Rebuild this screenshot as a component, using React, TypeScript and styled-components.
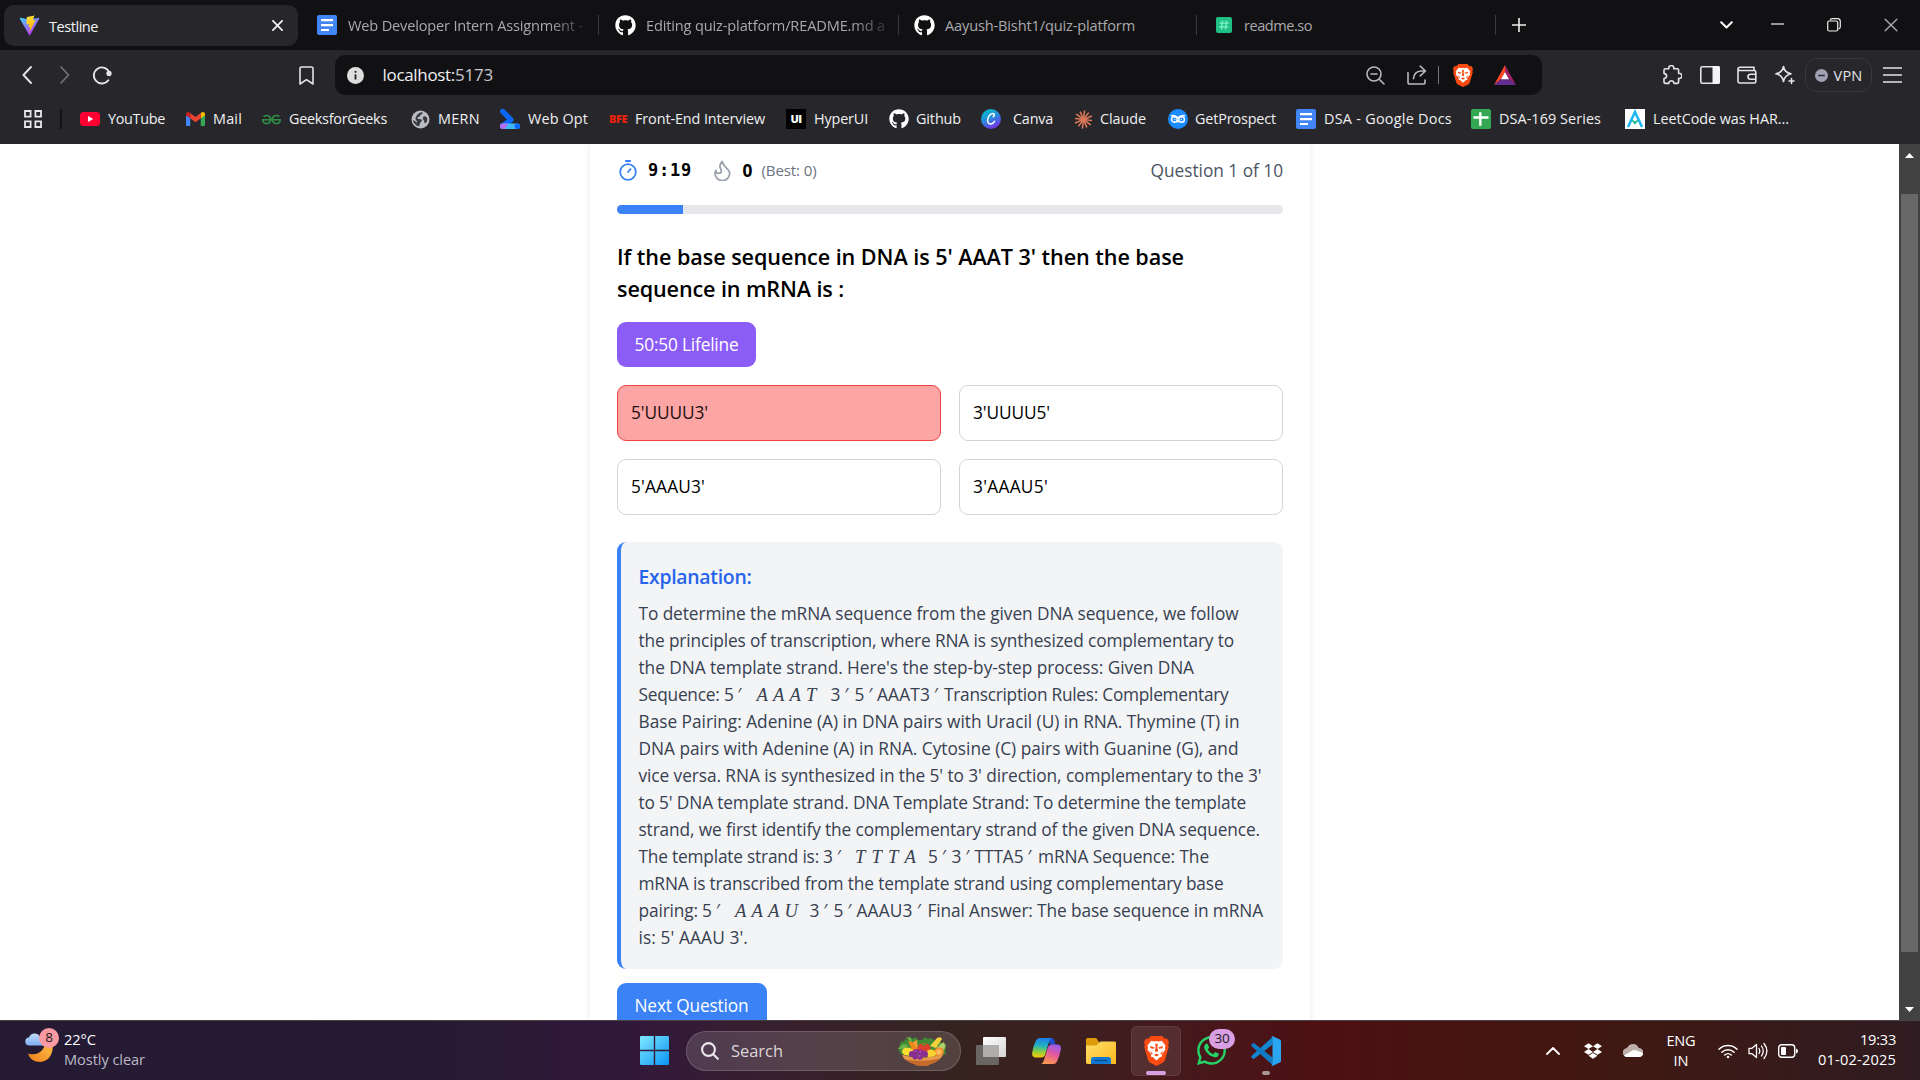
import React, { useLayoutEffect, useRef } from "react";
import styled, { createGlobalStyle, css } from "styled-components";
import { FaGithub, FaDropbox, FaWhatsapp } from "react-icons/fa";
import { SiGeeksforgeeks } from "react-icons/si";

const UI_FONT = `"Open Sans", "Noto Sans", sans-serif`;
const MATH_FONT = `"Liberation Serif", serif`;

const Global = createGlobalStyle`
  *, *::before, *::after { box-sizing: border-box; }
  body { margin: 0; background: #fff; overflow: hidden; }
  button { font: inherit; border: 0; padding: 0; margin: 0; cursor: pointer; }
  svg { display: block; flex: none; }
`;

/* ---------- Text with a fixed advance width ---------- */

const Label = styled.span<{ $size?: number; $weight?: number; $color?: string; $font?: string; $italic?: boolean; $ml?: number; $fade?: boolean }>`
  display: block;
  flex: none;
  width: fit-content;
  white-space: pre;
  font-family: ${(p) => p.$font ?? "inherit"};
  font-size: ${(p) => (p.$size ? `${p.$size}px` : "inherit")};
  font-weight: ${(p) => p.$weight ?? "inherit"};
  font-style: ${(p) => (p.$italic ? "italic" : "normal")};
  color: ${(p) => p.$color ?? "inherit"};
  margin-left: ${(p) => p.$ml ?? 0}px;
  ${(p) =>
    p.$fade &&
    css`
      mask-image: linear-gradient(90deg, #000 calc(100% - 34px), rgba(0, 0, 0, 0.2));
    `}
`;

type TextProps = {
  children: string;
  width: number;
  size?: number;
  weight?: number;
  color?: string;
  font?: string;
  italic?: boolean;
  ml?: number;
  fade?: boolean;
};

function Text({ children, width, size, weight, color, font, italic, ml, fade }: TextProps) {
  const ref = useRef<HTMLSpanElement>(null);
  useLayoutEffect(() => {
    const el = ref.current;
    if (!el) return;
    el.style.letterSpacing = "0px";
    const natural = el.getBoundingClientRect().width;
    el.style.letterSpacing = `${(width - natural) / children.length}px`;
  }, [children, width]);
  return (
    <Label ref={ref} $size={size} $weight={weight} $color={color} $font={font} $italic={italic} $ml={ml} $fade={fade}>
      {children}
    </Label>
  );
}

/* ---------- Shared layout ---------- */

const Screen = styled.div`
  width: 1920px;
  height: 1080px;
  display: flex;
  flex-direction: column;
  overflow: hidden;
  font-family: ${UI_FONT};
  background: #fff;
`;

const Slot = styled.span<{ $w: number; $ml?: number }>`
  flex: none;
  width: ${(p) => p.$w}px;
  margin-left: ${(p) => p.$ml ?? 0}px;
  display: flex;
  align-items: center;
  justify-content: center;
`;

/* ---------- Browser chrome ---------- */

const TabStrip = styled.div`
  height: 50px;
  flex: none;
  background: #111113;
  display: flex;
  align-items: center;
  color: #a9a9ad;
  font-size: 14.6px;
  line-height: 20px;
`;

const ActiveTab = styled.div`
  width: 294px;
  height: 41px;
  margin: 1px 0 0 4px;
  padding: 0 14.5px 0 15px;
  border-radius: 10px;
  background: #27272b;
  color: #f4f4f5;
  display: flex;
  align-items: center;
`;

const Spacer = styled.div`
  flex: 1;
`;

const Tab = styled.div<{ $lead: number; $gap: number; $w: number }>`
  width: ${(p) => p.$w}px;
  height: 20px;
  padding-left: ${(p) => p.$lead}px;
  border-right: 1px solid #3a3a3e;
  display: flex;
  align-items: center;
  gap: ${(p) => p.$gap}px;
`;

const Toolbar = styled.div`
  height: 50px;
  flex: none;
  background: #27272b;
  display: flex;
  align-items: center;
  color: #e4e4e8;
`;

const AddressBar = styled.div`
  width: 1207px;
  height: 40px;
  margin-left: 21px;
  border-radius: 10px;
  background: #111113;
  display: flex;
  align-items: center;
  font-size: 17px;
  line-height: 24px;
`;

const VLine = styled.span<{ $ml: number; $h: number; $w?: number; $c: string }>`
  flex: none;
  width: ${(p) => p.$w ?? 1}px;
  height: ${(p) => p.$h}px;
  margin-left: ${(p) => p.$ml}px;
  background: ${(p) => p.$c};
`;

const VpnPill = styled.div`
  width: 67px;
  height: 34px;
  margin-left: 10px;
  border: 1px solid #37373c;
  border-radius: 12px;
  display: flex;
  align-items: center;
  font-size: 14.5px;
`;

const BookmarkBar = styled.div`
  height: 44px;
  flex: none;
  padding-bottom: 6px;
  background: #27272b;
  color: #f0f0f2;
  display: flex;
  align-items: center;
  font-size: 14.4px;
  line-height: 20px;
`;

const WordMark = styled.span<{ $size: number; $color: string; $bg?: string; $w: number }>`
  width: ${(p) => p.$w}px;
  height: 20px;
  display: flex;
  align-items: center;
  justify-content: center;
  font-weight: 800;
  font-size: ${(p) => p.$size}px;
  letter-spacing: -0.5px;
  color: ${(p) => p.$color};
  background: ${(p) => p.$bg ?? "transparent"};
`;

/* ---------- Page ---------- */

const Viewport = styled.div`
  height: 876px;
  flex: none;
  display: flex;
  background: #fff;
  overflow: hidden;
`;

const Page = styled.main`
  width: 1899px;
  display: flex;
  justify-content: center;
`;

const Card = styled.section`
  width: 720px;
  height: 960px;
  padding: 13px 27px 0;
  margin-left: 1px;
  background: #fff;
  box-shadow: 0 0 7px rgba(0, 0, 0, 0.09);
`;

const StatusRow = styled.div`
  height: 27px;
  display: flex;
  align-items: center;
  font-size: 17.3px;
  line-height: 27px;
`;

const Track = styled.div`
  height: 9px;
  margin-top: 21px;
  border-radius: 4.5px;
  background: #e5e7eb;
  overflow: hidden;
`;

const Fill = styled.div`
  width: 9.9%;
  height: 100%;
  background: #3b82f6;
`;

const Question = styled.h2`
  margin: 27px 0 0;
  font-size: 21.6px;
  font-weight: 600;
  line-height: 31.5px;
  color: #000;
`;

const ActionButton = styled.button<{ $w: number; $bg: string; $mt: number }>`
  width: ${(p) => p.$w}px;
  height: 45px;
  margin-top: ${(p) => p.$mt}px;
  padding-left: 17.5px;
  border-radius: 9px;
  background: ${(p) => p.$bg};
  color: #fff;
  display: flex;
  align-items: center;
  font-family: ${UI_FONT};
  font-size: 17.3px;
  line-height: 27px;
`;

const Options = styled.div`
  margin-top: 18px;
  display: grid;
  grid-template-columns: 1fr 1fr;
  gap: 18px;
`;

const Option = styled.button<{ $wrong?: boolean }>`
  height: 56px;
  padding: 0 0 2px 13px;
  border: 1px solid ${(p) => (p.$wrong ? "#ef4444" : "#d1d5db")};
  border-radius: 9px;
  background: ${(p) => (p.$wrong ? "#fca5a5" : "#fff")};
  color: ${(p) => (p.$wrong ? "#1c1011" : "#000")};
  display: flex;
  align-items: center;
  font-family: ${UI_FONT};
  font-size: 17.3px;
  line-height: 27px;
`;

const Explanation = styled.article`
  height: 427px;
  margin-top: 27px;
  padding: 18px 18px 18px 17.5px;
  border-left: 4px solid #3b82f6;
  border-radius: 9px;
  background: #f3f4f6;
  color: #374151;
  font-size: 17.3px;
  line-height: 27px;
`;

const ExplanationTitle = styled.h3`
  margin: 0 0 9px;
  height: 31px;
  line-height: 33px;
  font-size: 19.4px;
  font-weight: 600;
  color: #2563eb;
`;

const Line = styled.div`
  display: flex;
  height: 27px;
`;

const Scrollbar = styled.div`
  width: 21px;
  background: #424242;
  display: flex;
  flex-direction: column;
  align-items: center;
  justify-content: space-between;
  padding: 9px 0 8px;
`;

const Thumb = styled.div`
  width: 17px;
  height: 758px;
  margin-top: 36px;
  margin-bottom: auto;
  background: #686868;
`;

/* ---------- Taskbar ---------- */

const Taskbar = styled.footer`
  height: 60px;
  flex: none;
  border-top: 1px solid #4a4145;
  display: flex;
  align-items: center;
  color: #fff;
  background: linear-gradient(90deg, #241b33 0, #261a33 420px, #32193a 640px, #38212c 800px, #35231f 960px, #3c2020 1060px, #4a1519 1240px, #4c1013 1330px, #441710 1540px, #391a18 1740px, #2f1c22 1920px);
`;

const Stack = styled.div<{ $ml: number; $align?: string; $lift: number }>`
  flex: none;
  margin-left: ${(p) => p.$ml}px;
  padding-bottom: ${(p) => p.$lift}px;
  display: flex;
  flex-direction: column;
  align-items: ${(p) => p.$align ?? "flex-start"};
  font-size: 14.6px;
  line-height: 20px;
`;

const WeatherIcon = styled.div`
  position: relative;
  width: 36px;
  height: 36px;
  margin-left: 24px;
  margin-bottom: 2px;
`;

const Badge = styled.span<{ $l: number; $t: number; $w: number; $bg: string }>`
  position: absolute;
  left: ${(p) => p.$l}px;
  top: ${(p) => p.$t}px;
  width: ${(p) => p.$w}px;
  height: 20px;
  border-radius: 10px;
  background: ${(p) => p.$bg};
  color: #1a1a1a;
  font-size: 13.5px;
  line-height: 19px;
  text-align: center;
  letter-spacing: -0.3px;
`;

const SearchBox = styled.div`
  width: 275px;
  height: 40px;
  margin-left: 17px;
  border: 1px solid rgba(255, 255, 255, 0.16);
  border-radius: 20px;
  background: rgba(255, 255, 255, 0.14);
  display: flex;
  align-items: center;
  font-size: 16.4px;
  color: #dcd6da;
`;

const TaskApp = styled.div<{ $ml: number; $w: number; $active?: boolean }>`
  position: relative;
  flex: none;
  width: ${(p) => p.$w}px;
  height: 50px;
  margin-left: ${(p) => p.$ml}px;
  border-radius: 6px;
  display: flex;
  align-items: center;
  justify-content: center;
  ${(p) =>
    p.$active &&
    css`
      background: rgba(255, 255, 255, 0.09);
      box-shadow: inset 0 0 0 1px rgba(255, 255, 255, 0.07);
    `}
`;

const Indicator = styled.span<{ $w: number; $c: string }>`
  position: absolute;
  bottom: 1px;
  left: calc(50% - ${(p) => p.$w / 2}px);
  width: ${(p) => p.$w}px;
  height: 4px;
  border-radius: 2px;
  background: ${(p) => p.$c};
`;

/* ---------- Drawings ---------- */

const stroke = { fill: "none", stroke: "currentColor", strokeLinecap: "round" as const, strokeLinejoin: "round" as const };

const ViteLogo = () => (
  <svg width="21" height="21" viewBox="0 0 32 32">
    <defs>
      <linearGradient id="va" x1="0" y1="0" x2=".6" y2="1"><stop offset="0" stopColor="#41d1ff" /><stop offset="1" stopColor="#bd34fe" /></linearGradient>
      <linearGradient id="vb" x1=".4" y1="0" x2=".6" y2="1"><stop offset="0" stopColor="#ffea83" /><stop offset=".1" stopColor="#ffdd35" /><stop offset="1" stopColor="#ffa800" /></linearGradient>
    </defs>
    <path fill="url(#va)" d="M30.8 5.6 17 30.3a.9.9 0 0 1-1.6 0L1.3 5.6a.9.9 0 0 1 1-1.3l13.8 2.5h.3l13.6-2.5a.9.9 0 0 1 .8 1.3z" />
    <path fill="url(#vb)" d="m22.4 1-10.200 2a.4.4 0 0 0-.3.4l-.6 10.600c0 .3.2.5.5.4l2.800-.6c.3-.1.5.2.5.4l-.9 4.200c0 .3.2.5.5.4l1.800-.5c.2-.1.5.2.4.4l-1.300 6.500c-.1.4.4.6.7.3l8.900-17.500c.1-.2-.1-.6-.4-.5l-3 .6c-.3 0-.5-.2-.4-.5l2-6.800c.1-.3-.2-.5-.5-.4z" />
  </svg>
);

const DocIcon = () => (
  <svg width="20" height="20" viewBox="0 0 20 20">
    <rect width="20" height="20" rx="2" fill="#4285f4" />
    <path d="M4 5.200h12M4 10.200h12M4 15h8" stroke="#fff" strokeWidth="2.200" />
  </svg>
);

const ReadmeIcon = () => (
  <svg width="16" height="16" viewBox="0 0 16 16">
    <rect width="16" height="16" rx="2" fill="#1fbf87" />
    <path d="M6.500 3.500 5.500 12.500M10.500 3.500 9.500 12.500M3.500 6.200h9.500M3 9.800h9.500" stroke="#7df5c5" strokeWidth="1.300" />
  </svg>
);

const CloseGlyph = ({ s, w }: { s: number; w: number }) => (
  <svg width={s} height={s} viewBox="0 0 12 12" {...stroke} strokeWidth={w}><path d="M1 1 11 11M11 1 1 11" /></svg>
);

const YouTubeIcon = () => (
  <svg width="20" height="14" viewBox="0 0 20 14"><rect width="20" height="14" rx="3.500" fill="#ff0033" /><path d="M8 4v6l5.200-3z" fill="#fff" /></svg>
);

const GmailIcon = () => (
  <svg width="19" height="14" viewBox="0 0 19 14">
    <path d="M0 2v11.200q0 .8.8.8h3.400V5.500z" fill="#4285f4" />
    <path d="M19 2v11.200q0 .8-.8.8h-3.400V5.500z" fill="#34a853" />
    <path d="M0 2.300C0 .3 2-.6 3.600.6L4.200 1v5.200L0 3.500z" fill="#c5221f" />
    <path d="M19 2.300C19 .3 17-.6 15.400.6L14.800 1v5.200L19 3.500z" fill="#fbbc04" />
    <path d="M4.200 1 9.500 5l5.300-4v5.200L9.500 10.200 4.200 6.200z" fill="#ea4335" />
  </svg>
);

const GlobeIcon = () => (
  <svg width="19" height="19" viewBox="0 0 19 19">
    <circle cx="9.500" cy="9.500" r="9" fill="#b9bcc1" />
    <path d="M10.500 2.200c2 .2 1.200 1.600-.3 2.200-1.500.5-.8 2-2 2.400-1.200.3-2 .6-1.700 1.600.4 1 3.200.2 4.200 1.200 1 1.200-.8 2.400-1.600 3.400-.5.8-.3 2.500-1.300 3.200-3-.6-5.500-3.200-5.800-6 1.500 0 2.500 1 3.300 2 .8.6 1.200-.6.5-1.300C4.500 9.700 4 8.200 5 6.700 6 5 8.500 2 10.500 2.200zM12.500 6.500c1.500-.8 3.400.3 3.800 2.500.2 1.800-.9 4-2.100 4.300-1.300 0-.5-1.900-1.300-2.700-1-1-1.500-3.200-.4-4.100z" fill="#3a3b3f" />
  </svg>
);

const WebOptIcon = () => (
  <svg width="20" height="20" viewBox="0 0 20 20">
    <path d="M2.600 2.300 11 10.800 2.600 16.800" stroke="#0a68ff" strokeWidth="5.200" strokeLinejoin="round" strokeLinecap="round" fill="none" />
    <rect y="14.500" width="20" height="5.500" rx="2.700" fill="#41b8f5" />
    <path d="M2.700 14.500H8L5 20H2.700a2.700 2.700 0 0 1 0-5.500z" fill="#b46cf0" />
    <circle cx="17.300" cy="17.200" r="2.700" fill="#0a68ff" />
  </svg>
);

const CanvaIcon = () => (
  <svg width="20" height="20" viewBox="0 0 20 20">
    <defs><linearGradient id="cv" x1=".2" y1="0" x2=".7" y2="1"><stop offset="0" stopColor="#00c4cc" /><stop offset=".5" stopColor="#2a86dd" /><stop offset="1" stopColor="#7d2ae8" /></linearGradient></defs>
    <circle cx="10" cy="10" r="10" fill="url(#cv)" />
    <path d="M12.200 7.800c1.300-.5 1.800-3.200-.3-3.300C9 4.500 6.400 8.500 6.600 11.700c.2 2.300 1.500 3.600 3.200 3.400 1.700-.2 2.900-1.300 3.700-2.700" fill="none" stroke="#fff" strokeWidth="1.500" strokeLinecap="round" />
  </svg>
);

const ClaudeIcon = () => (
  <svg width="19" height="19" viewBox="-10 -10 20 20" stroke="#d97757" strokeWidth="1.700" strokeLinecap="round">
    {Array.from({ length: 12 }, (_, i) => {
      const a = (i * Math.PI) / 6 + 0.12;
      const r = i % 2 ? 9 : 8.4;
      return <path key={i} d={`M0 0 ${(Math.cos(a) * r).toFixed(2)} ${(Math.sin(a) * r).toFixed(2)}`} />;
    })}
  </svg>
);

const ProspectIcon = () => (
  <svg width="20" height="20" viewBox="0 0 20 20">
    <circle cx="10" cy="10" r="10" fill="#1b8cff" />
    <g fill="none" stroke="#fff" strokeWidth="1.400"><circle cx="6.400" cy="10.500" r="2.800" /><circle cx="13.600" cy="10.500" r="2.800" /><path d="M2.800 6.800Q6 5.800 10 8.500 14 5.800 17.200 6.800M9.300 11 10 12.500l.7-1.500" /></g>
    <circle cx="6.800" cy="10.500" r=".7" fill="#fff" /><circle cx="13.200" cy="10.500" r=".7" fill="#fff" />
  </svg>
);

const SheetIcon = () => (
  <svg width="20" height="20" viewBox="0 0 20 20"><rect width="20" height="20" rx="2" fill="#34a853" /><path d="M9.300 3.200v13.600M2.500 8.500h15" stroke="#fff" strokeWidth="2.400" /></svg>
);

const AlgoIcon = () => (
  <svg width="20" height="20" viewBox="0 0 20 20"><rect width="20" height="20" fill="#fff" /><path d="M3 18 10 3l7 15" fill="none" stroke="#1fb6f5" strokeWidth="2.600" /><path d="m6 11 4 4.500 4-4.500-2.500.3L10 12.500l-1.500-1.200z" fill="#17b890" /></svg>
);

const GridIcon = () => (
  <svg width="18" height="18" viewBox="0 0 18 18" fill="none" stroke="#e8e8ea" strokeWidth="1.800"><path d="M1 1h5.600v5.600H1zM11.400 1H17v5.600h-5.600zM1 11.400h5.600V17H1zM11.400 11.400H17V17h-5.600z" /></svg>
);

const BraveIcon = ({ w, h }: { w: number; h: number }) => (
  <svg width={w} height={h} viewBox="0 0 25 30" preserveAspectRatio="none">
    <path d="M7 0h11l2.800 2.800 2.200-.3L25 6l-.8 3 .5 2.200-3.800 13q-.5 1.500-1.800 2.400L12.500 30 5.900 26.600q-1.300-.9-1.800-2.400L.3 11.200.8 9 0 6l2-3.500 2.200.3z" fill="#fb4a12" />
    <path d="m7.300 4.800 3 .6 2.200-.5 2.200.5 3-.6 3.800 4.700-.6 2.600.6 1.700-3.700 4.400.3 2.300-2.300.7-3.300 3.300-3.300-3.300-2.300-.7.300-2.300-3.700-4.400.6-1.700-.6-2.600z" fill="#fff" />
    <path d="m6 10 4.800 1.500-1 1.300-3.300-.6zM19 10l-4.800 1.500 1 1.300 3.300-.6zM11.200 7.200l1.300.9 1.300-.9-.5 4.500.9 3.300-1.700 1-1.700-1 .9-3.300zM5.800 14.500l2.900 2.900-.9 1.300zM19.200 14.500l-2.900 2.900.9 1.300zM9.800 18.700l2.700-1 2.700 1-2.700 1.800z" fill="#fb4a12" />
  </svg>
);

const BatIcon = () => (
  <svg width="22" height="20" viewBox="0 0 22 20"><path d="M11 0v7L7.200 14 0 20z" fill="#ff4724" /><path d="M11 0v7l3.800 7L22 20z" fill="#9e1f63" /><path d="M0 20h22l-7.200-6H7.200z" fill="#662d91" /><path d="m11 7 4 7.300H7z" fill="#fff" /></svg>
);

const MoonCloud = () => (
  <svg width="36" height="36" viewBox="0 0 36 36">
    <defs><linearGradient id="mn" x1="1" y1="0" x2="0" y2="1"><stop offset="0" stopColor="#ffc94a" /><stop offset="1" stopColor="#ee7d1c" /></linearGradient><linearGradient id="cd" x1="0" y1="0" x2="0" y2="1"><stop offset="0" stopColor="#c2dcfb" /><stop offset="1" stopColor="#7fb0f2" /></linearGradient></defs>
    <path d="M24 5c8 5 6 24-7.500 25-6.500 0-11-3.500-12.500-8.500C14 25 22.500 17 21 8z" fill="url(#mn)" />
    <path d="M5.500 13.500a4 4 0 0 1-.5-8 6 6 0 0 1 10.500-1.600l4 9.600z" fill="url(#cd)" />
  </svg>
);

const WindowsLogo = () => (
  <svg width="29" height="29" viewBox="0 0 29 29">
    <defs><linearGradient id="wl" x1="0" y1="0" x2="1" y2="1"><stop offset="0" stopColor="#7fe9ff" /><stop offset="1" stopColor="#0a94f5" /></linearGradient></defs>
    <path fill="url(#wl)" d="M1.200 0h12.600v13.800H0V1.200A1.200 1.200 0 0 1 1.200 0zM15.200 0h12.600A1.200 1.200 0 0 1 29 1.200v12.600H15.200zM0 15.200h13.800V29H1.200A1.200 1.200 0 0 1 0 27.800zM15.200 15.200H29v12.600a1.200 1.200 0 0 1-1.200 1.200H15.200z" />
  </svg>
);

const FruitBowl = () => (
  <svg width="50" height="31" viewBox="0 0 50 31">
    <path d="m1 14 2-4 1-4 3 1 1-3 3 1 2-4 2 3 4-2 2 3h4l3-3 3 2 3-1 4 3 5 0 2 3 4 2-1 4 1 4-8 2-26 1L4 19z" fill="#3f8b35" />
    <path d="m1 14 5-5 5 1-3 4zM42 8l7 1-2 8zM9 2l5 1 1 5z" fill="#6fb548" />
    <path d="m11 6 7 2 3 8-5 1z" fill="#f4861f" /><path d="m16 7 4-2 1 10z" fill="#f9a03a" />
    <path d="M33 11 40 3q4-2 5 1l-6 9z" fill="#f6cf3a" /><path d="m39 13 8-6 1 6-6 5z" fill="#b4cf6e" />
    <ellipse cx="27" cy="13" rx="6.500" ry="5" fill="#d9402c" /><path d="M24 8.500h6l-3 2.500z" fill="#4c9a2e" />
    <ellipse cx="10.500" cy="16.500" rx="5.500" ry="4" fill="#fadb2f" />
    <circle cx="42" cy="17" r="4.800" fill="#f58a28" /><circle cx="42" cy="17" r="2.800" fill="#ffbb62" />
    <ellipse cx="34" cy="18.500" rx="5" ry="4" fill="#f7d12e" />
    <path d="M5 20q20 6 41-1-3 8-13 10.500-1 1.500-7.500 1.500t-7.500-1.500Q8 27 5 20z" fill="#c46a2b" /><path d="M5 20q20 6 41-1-1 3-3 4.500-16 4-35 1z" fill="#e69a4c" />
    <g fill="#8a2d93"><circle cx="15" cy="19" r="3" /><circle cx="19" cy="17" r="3" /><circle cx="24" cy="17.500" r="3" /><circle cx="28" cy="19" r="3" /><circle cx="18" cy="22" r="2.500" /><circle cx="23" cy="22" r="2.800" /></g>
    <g fill="#b04fb5"><circle cx="18.500" cy="16.200" r="1" /><circle cx="23.500" cy="16.800" r="1" /><circle cx="22.500" cy="21" r="1" /></g>
  </svg>
);

const TaskViewIcon = () => (
  <svg width="30" height="28" viewBox="0 0 30 28">
    <defs><linearGradient id="tv" x1="0" y1="0" x2="1" y2="1"><stop offset="0" stopColor="#fff" /><stop offset="1" stopColor="#d5d5d5" /></linearGradient></defs>
    <rect y="8" width="23" height="20" rx="1" fill="#6a6665" /><rect x="7" width="23" height="20" rx="1" fill="url(#tv)" /><path d="M7 8h16v12H7z" fill="#b0adac" />
  </svg>
);

const CopilotIcon = () => (
  <svg width="29" height="26" viewBox="0 0 29 26">
    <defs>
      <linearGradient id="ca" x1=".4" y1="0" x2=".3" y2="1"><stop offset="0" stopColor="#1b7fe8" /><stop offset=".4" stopColor="#23b3c0" /><stop offset=".7" stopColor="#8fcf3c" /><stop offset="1" stopColor="#ffc90a" /></linearGradient>
      <linearGradient id="cb" x1=".7" y1="0" x2=".3" y2="1"><stop offset="0" stopColor="#9b5cf0" /><stop offset=".45" stopColor="#e2589c" /><stop offset="1" stopColor="#ff9a4c" /></linearGradient>
    </defs>
    <path d="M16 0h3.500q2 0 2.700 2l1.300 4.500H18z" fill="#1f4fd0" />
    <path d="M7.500 0H20q-2 .5-2.700 3L13.500 16q-1 3.500-4.500 3.500H4Q-.5 19.500.2 14.500 1.500 7 4 2.500 5.200 0 7.500 0z" fill="url(#ca)" />
    <path d="M21.500 26H9q2-.5 2.700-3l3.800-13q1-3.500 4.500-3.500h5q4.500 0 3.800 5-1.300 7.500-3.800 12Q23.800 26 21.500 26z" fill="url(#cb)" />
    <path d="M12.600 19.500 15.500 10q.8-3 3.300-3.400h-2.500L12.800 18z" fill="#3b1f26" />
  </svg>
);

const FolderIcon = () => (
  <svg width="30" height="26" viewBox="0 0 30 26">
    <defs><linearGradient id="fd" x1="0" y1="0" x2="1" y2="1"><stop offset="0" stopColor="#ffdf6b" /><stop offset="1" stopColor="#fcb81c" /></linearGradient></defs>
    <path d="M0 1.500Q0 0 1.500 0h7.700q1 0 1.600.8L13 4v5H0z" fill="#dd9a0b" />
    <path d="M0 7.500h9.500q.8 0 1.400-.6l2.600-2.700q.6-.6 1.400-.6h13.600Q30 3.600 30 5v21H1.500Q0 26 0 24.600z" fill="url(#fd)" />
    <path d="M5 26v-4.500Q5 19 7.500 19h15q2.500 0 2.500 2.500V26z" fill="#0f78d0" /><path d="M8.500 22.500h13" stroke="#0a4f92" strokeWidth="1.400" />
  </svg>
);

const CodeIcon = () => (
  <svg width="30" height="30" viewBox="0 0 30 30">
    <path d="M21.500 8.500 3.200 22.700q-.6.5-1.300 0L.4 21.300q-.7-.7 0-1.400L22 .5z" fill="#1287d0" />
    <path d="M21.500 21.500 3.200 7.300q-.6-.5-1.300 0L.4 8.700q-.7.7 0 1.400L22 29.500z" fill="#0f7bc4" />
    <path d="M21.800.2 28.900 3.500q1.100.6 1.100 1.800v19.400q0 1.200-1.100 1.800l-7.100 3.300q-1 .4-1.800-.6 1.500.9 1.500-1.200V2q0-2.100-1.500-1.200.8-1 1.800-.6z" fill="#2aa5f2" />
  </svg>
);

const BOOKMARKS: { icon: React.ReactNode; label: string; ml: number; iw: number; gap: number; width: number }[] = [
  { icon: <YouTubeIcon />, label: "YouTube", ml: 18, iw: 20, gap: 8, width: 57 },
  { icon: <GmailIcon />, label: "Mail", ml: 21, iw: 19, gap: 8, width: 29 },
  { icon: <SiGeeksforgeeks size={19} color="#2f8d46" />, label: "GeeksforGeeks", ml: 20, iw: 19, gap: 8, width: 98 },
  { icon: <GlobeIcon />, label: "MERN", ml: 24, iw: 19, gap: 8, width: 42 },
  { icon: <WebOptIcon />, label: "Web Opt", ml: 20, iw: 20, gap: 8, width: 60 },
  { icon: <WordMark $w={20} $size={11} $color="#e8220c">BFE</WordMark>, label: "Front-End Interview", ml: 20, iw: 20, gap: 7, width: 130 },
  { icon: <WordMark $w={20} $size={11} $color="#fff" $bg="#000">UI</WordMark>, label: "HyperUI", ml: 21, iw: 20, gap: 8, width: 54 },
  { icon: <FaGithub size={20} color="#fff" />, label: "Github", ml: 21, iw: 20, gap: 7, width: 45 },
  { icon: <CanvaIcon />, label: "Canva", ml: 20, iw: 20, gap: 12, width: 40 },
  { icon: <ClaudeIcon />, label: "Claude", ml: 21, iw: 19, gap: 7, width: 46 },
  { icon: <ProspectIcon />, label: "GetProspect", ml: 22, iw: 20, gap: 7, width: 81 },
  { icon: <DocIcon />, label: "DSA - Google Docs", ml: 20, iw: 20, gap: 8, width: 128 },
  { icon: <SheetIcon />, label: "DSA-169 Series", ml: 19, iw: 20, gap: 8, width: 102 },
  { icon: <AlgoIcon />, label: "LeetCode was HAR...", ml: 24, iw: 20, gap: 8, width: 136 },
];

type Piece = { t: string; w: number; ml?: number; math?: boolean };

const math = (letters: string, lead: number, step: number): Piece[] =>
  letters.split("").map((t, i) => ({ t, w: 11, ml: i ? step : lead, math: true }));

const LINES: Piece[][] = [
  [{ t: "To determine the mRNA sequence from the given DNA sequence, we follow", w: 600 }],
  [{ t: "the principles of transcription, where RNA is synthesized complementary to", w: 595.5 }],
  [{ t: "the DNA template strand. Here's the step-by-step process: Given DNA", w: 555.5 }],
  [
    { t: "Sequence:", w: 81 }, { t: "5", w: 10, ml: 4.5 }, { t: "′", w: 5, ml: 3.5 },
    ...math("AAAT", 14, 5.5),
    { t: "3", w: 10, ml: 13.5 }, { t: "′", w: 5, ml: 4 }, { t: "5", w: 10, ml: 5 }, { t: "′", w: 5, ml: 4 },
    { t: "AAAT3", w: 53, ml: 3.5 }, { t: "′", w: 5, ml: 4 },
    { t: "Transcription Rules: Complementary", w: 284.5, ml: 5 },
  ],
  [{ t: "Base Pairing: Adenine (A) in DNA pairs with Uracil (U) in RNA. Thymine (T) in", w: 601 }],
  [{ t: "DNA pairs with Adenine (A) in RNA. Cytosine (C) pairs with Guanine (G), and", w: 600 }],
  [{ t: "vice versa. RNA is synthesized in the 5' to 3' direction, complementary to the 3'", w: 623 }],
  [{ t: "to 5' DNA template strand. DNA Template Strand: To determine the template", w: 607.5 }],
  [{ t: "strand, we first identify the complementary strand of the given DNA sequence.", w: 621.5 }],
  [
    { t: "The template strand is:", w: 180.5 }, { t: "3", w: 10, ml: 4 }, { t: "′", w: 5, ml: 4 },
    ...math("TTTA", 13, 5.5),
    { t: "5", w: 10, ml: 12.5 }, { t: "′", w: 5, ml: 4 }, { t: "3", w: 10, ml: 4.5 }, { t: "′", w: 5, ml: 4 },
    { t: "TTTA5", w: 49, ml: 4 }, { t: "′", w: 5, ml: 4 },
    { t: "mRNA Sequence: The", w: 171, ml: 5.5 },
  ],
  [{ t: "mRNA is transcribed from the template strand using complementary base", w: 585 }],
  [
    { t: "pairing:", w: 59.5 }, { t: "5", w: 10, ml: 4 }, { t: "′", w: 5, ml: 4 },
    ...math("AAAU", 14, 5.5),
    { t: "3", w: 10, ml: 14 }, { t: "′", w: 5, ml: 4 }, { t: "5", w: 10, ml: 5 }, { t: "′", w: 5, ml: 4 },
    { t: "AAAU3", w: 56, ml: 4 }, { t: "′", w: 5, ml: 4.5 },
    { t: "Final Answer: The base sequence in mRNA", w: 335.5, ml: 5.5 },
  ],
  [{ t: "is: 5' AAAU 3'.", w: 109.5 }],
];

export default function App() {
  return (
    <Screen>
      <Global />

      <TabStrip>
        <ActiveTab>
          <ViteLogo />
          <Text width={49} ml={9}>Testline</Text>
          <Spacer />
          <Slot $w={12}><CloseGlyph s={11} w={1.9} /></Slot>
        </ActiveTab>
        <Tab $w={301} $lead={19} $gap={11}><DocIcon /><Text width={235} fade>Web Developer Intern Assignment -</Text></Tab>
        <Tab $w={300} $lead={16} $gap={10}><FaGithub size={21} color="#fff" /><Text width={239} fade>Editing quiz-platform/README.md a</Text></Tab>
        <Tab $w={298} $lead={15} $gap={10}><FaGithub size={21} color="#fff" /><Text width={190}>Aayush-Bisht1/quiz-platform</Text></Tab>
        <Tab $w={299} $lead={19} $gap={12}><ReadmeIcon /><Text width={68}>readme.so</Text></Tab>
        <Slot $w={14} $ml={16}>
          <svg width="14" height="14" viewBox="0 0 14 14" stroke="#eee" strokeWidth="1.600"><path d="M7 0v14M0 7h14" /></svg>
        </Slot>
        <Slot $w={13} $ml={194}>
          <svg width="13" height="8" viewBox="0 0 13 8" {...stroke} stroke="#fff" strokeWidth="2"><path d="m1.200 1.200 5.300 5.300 5.300-5.300" /></svg>
        </Slot>
        <Slot $w={13} $ml={38}>
          <svg width="13" height="4" viewBox="0 0 13 4"><path d="M0 1h13" stroke="#eee" strokeWidth="1.200" /></svg>
        </Slot>
        <Slot $w={14} $ml={42.5}>
          <svg width="14" height="14" viewBox="0 0 14 14" fill="none" stroke="#eee" strokeWidth="1.200"><rect x=".7" y="3" width="10" height="10" rx="1.500" /><path d="M3.200 2.500Q3.500.7 5 .7h5.500q2.800 0 2.800 2.800V9q0 1.500-1.800 1.800" /></svg>
        </Slot>
        <Slot $w={14} $ml={43.5}><CloseGlyph s={14} w={1.2} /></Slot>
      </TabStrip>

      <Toolbar>
        <Slot $w={10} $ml={22}>
          <svg width="10" height="18" viewBox="0 0 10 18" {...stroke} strokeWidth="1.900"><path d="M9 1 1.500 9 9 17" /></svg>
        </Slot>
        <Slot $w={10} $ml={28}>
          <svg width="10" height="18" viewBox="0 0 10 18" {...stroke} stroke="#737378" strokeWidth="1.700"><path d="m1 1 7.500 8L1 17" /></svg>
        </Slot>
        <Slot $w={19} $ml={23}>
          <svg width="19" height="19" viewBox="0 0 19 19" {...stroke} strokeWidth="1.900"><path d="M15.300 14.200A8 8 0 1 1 16.300 6.500" /><circle cx="16" cy="7.500" r="1.700" fill="currentColor" /></svg>
        </Slot>
        <Slot $w={15} $ml={187}>
          <svg width="15" height="19" viewBox="0 0 15 19" {...stroke} strokeWidth="1.600"><path d="M1 2.600Q1 1 2.600 1h9.800Q14 1 14 2.600V18l-6.500-4.300L1 18z" /></svg>
        </Slot>
        <AddressBar>
          <Slot $w={17} $ml={12}>
            <svg width="17" height="17" viewBox="0 0 17 17"><circle cx="8.500" cy="8.500" r="8.500" fill="#dededf" /><path d="M8.500 7.300v5.200" stroke="#222" strokeWidth="1.800" /><circle cx="8.500" cy="4.800" r="1.100" fill="#222" /></svg>
          </Slot>
          <Text width={72.5} ml={18.5} color="#f0f0f2">localhost:</Text>
          <Text width={38} color="#c9c9cd">5173</Text>
          <Slot $w={19} $ml={873}>
            <svg width="19" height="19" viewBox="0 0 19 19" {...stroke} stroke="#b9b9be" strokeWidth="1.600"><circle cx="8" cy="8" r="7" /><path d="M5 8h6M13.200 13.200 18 18" /></svg>
          </Slot>
          <Slot $w={20} $ml={22}>
            <svg width="20" height="20" viewBox="0 0 20 20" {...stroke} stroke="#b9b9be" strokeWidth="1.600"><path d="M1 7.500v9.700Q1 19 2.800 19h13.400q1.800 0 1.800-1.800V15M13.200 1.200 18.500 6l-5.300 4.800M18.200 6H14q-6.800.3-7.500 7.700" /></svg>
          </Slot>
          <VLine $ml={11} $h={18} $c="#75757a" />
          <Slot $w={20} $ml={14}><BraveIcon w={20} h={23} /></Slot>
          <Slot $w={22} $ml={21}><BatIcon /></Slot>
        </AddressBar>
        <Slot $w={20} $ml={119.5}>
          <svg width="20" height="20" viewBox="0 0 20 20" {...stroke} strokeWidth="1.600"><path d="M2 5.200q0-1.400 1.400-1.400h3.400a2.600 2.600 0 1 1 5 0h3.400q1.400 0 1.400 1.400v3.200a2.600 2.600 0 1 1 0 5v3.600q0 1.400-1.400 1.400h-3q-.8-2.600-2.800-2.600t-2.800 2.600H3.400Q2 18.400 2 17v-3.500q2.600-.4 2.600-2.500T2 8.400z" /></svg>
        </Slot>
        <Slot $w={20} $ml={18.5}>
          <svg width="20" height="18" viewBox="0 0 20 18"><rect x=".8" y=".8" width="18.400" height="16.400" rx="1.500" fill="none" stroke="#e4e4e8" strokeWidth="1.600" /><path d="M12.500 0H18q2 0 2 2v14q0 2-2 2h-5.500z" fill="#f4f4f6" /></svg>
        </Slot>
        <Slot $w={20} $ml={17}>
          <svg width="20" height="18" viewBox="0 0 20 18" {...stroke} strokeWidth="1.600"><path d="M17 4.500V1.200H3q-2 0-2 1.900Q1 4.500 3 4.500h14.200q1.600 0 1.600 1.600v9.300q0 1.600-1.600 1.600H3q-2 0-2-2V3M18.800 8.300h-5.300q-2.500 0-2.500 2.500t2.500 2.500h5.300" /></svg>
        </Slot>
        <Slot $w={20} $ml={18}>
          <svg width="20" height="20" viewBox="0 0 20 20" {...stroke} strokeWidth="1.600"><path d="M8.500 1.500q1 6 7.500 7.300-6.500 1.500-7.500 7.700Q7.500 10.300 1 8.800 7.500 7.500 8.500 1.500zM16.500 13.500v5M14 16h5" /></svg>
        </Slot>
        <VpnPill>
          <Slot $w={13} $ml={9}>
            <svg width="13" height="13" viewBox="0 0 13 13"><circle cx="6.500" cy="6.500" r="6.500" fill="#a0a1b2" /><path d="M3.200 6.500h6.600" stroke="#2a2a30" strokeWidth="1.500" /></svg>
          </Slot>
          <Text width={29} ml={5.5}>VPN</Text>
        </VpnPill>
        <Slot $w={19} $ml={11}>
          <svg width="19" height="16" viewBox="0 0 19 16" stroke="#e4e4e8" strokeWidth="1.700"><path d="M0 1h19M0 8h19M0 15h19" /></svg>
        </Slot>
      </Toolbar>

      <BookmarkBar>
        <Slot $w={18} $ml={23.5}><GridIcon /></Slot>
        <VLine $ml={18.5} $h={20} $w={2} $c="#131315" />
        {BOOKMARKS.map((b) => (
          <React.Fragment key={b.label}>
            <Slot $w={b.iw} $ml={b.ml}>{b.icon}</Slot>
            <Text width={b.width} ml={b.gap}>{b.label}</Text>
          </React.Fragment>
        ))}
      </BookmarkBar>

      <Viewport>
        <Page>
          <Card>
            <StatusRow>
              <Slot $w={18} $ml={2}>
                <svg width="18" height="21" viewBox="0 0 18 21" {...stroke} stroke="#3b82f6" strokeWidth="1.800"><circle cx="9" cy="12" r="7.800" /><path d="M6.800 1h4.400M9 12l2.600-2.800" /></svg>
              </Slot>
              <Text width={44} ml={11} size={17} weight={700} color="#000" font={`"DejaVu Sans Mono", monospace`}>9:19</Text>
              <Slot $w={17} $ml={22}>
                <svg width="17" height="21" viewBox="0 0 17 21" {...stroke} stroke="#9ca3af" strokeWidth="1.800"><path d="M5 13.200a2.300 2.300 0 0 0 2.300-2.300c0-1.300-.5-1.900-.9-2.800-1-2-.2-4.600 1.900-6.600.5 2.800 1.900 4.600 3.700 6.100s3.700 3.500 3.700 5.700a7.300 7.300 0 1 1-14.700 0c0-1.100.4-2.200 1-2.900A2.300 2.300 0 0 0 5 13.200z" /></svg>
              </Slot>
              <Text width={10} ml={11.5} weight={700} color="#000">0</Text>
              <Text width={55} ml={9} size={15.1} color="#6b7280">(Best: 0)</Text>
              <Spacer />
              <Text width={132.5} color="#4b5563">Question 1 of 10</Text>
            </StatusRow>
            <Track><Fill /></Track>
            <Question>
              <Text width={567}>If the base sequence in DNA is 5' AAAT 3' then the base</Text>
              <Text width={227}>sequence in mRNA is :</Text>
            </Question>
            <ActionButton $w={139} $mt={18} $bg="#8b5cf6"><Text width={104}>50:50 Lifeline</Text></ActionButton>
            <Options>
              <Option $wrong><Text width={77}>5'UUUU3'</Text></Option>
              <Option><Text width={77}>3'UUUU5'</Text></Option>
              <Option><Text width={74}>5'AAAU3'</Text></Option>
              <Option><Text width={75}>3'AAAU5'</Text></Option>
            </Options>
            <Explanation>
              <ExplanationTitle><Text width={113}>Explanation:</Text></ExplanationTitle>
              {LINES.map((line, i) => (
                <Line key={i}>
                  {line.map((p, j) => (
                    <Text key={j} width={p.w} ml={p.ml} size={p.math ? 18.6 : undefined} font={p.math ? MATH_FONT : undefined} italic={p.math}>{p.t}</Text>
                  ))}
                </Line>
              ))}
            </Explanation>
            <ActionButton $w={150} $mt={14} $bg="#3b82f6"><Text width={114} weight={500}>Next Question</Text></ActionButton>
          </Card>
        </Page>
        <Scrollbar>
          <svg width="9" height="5" viewBox="0 0 9 5"><path d="M4.500 0 9 5H0z" fill="#fff" /></svg>
          <Thumb />
          <svg width="9" height="5" viewBox="0 0 9 5"><path d="M0 0h9L4.500 5z" fill="#fff" /></svg>
        </Scrollbar>
      </Viewport>

      <Taskbar>
        <WeatherIcon>
          <MoonCloud />
          <Badge $l={15} $t={-4} $w={20} $bg="#fb9aa2">8</Badge>
        </WeatherIcon>
        <Stack $ml={4} $lift={4}>
          <Text width={32}>22°C</Text>
          <Text width={81} color="#bdb8c4">Mostly clear</Text>
        </Stack>
        <Slot $w={29} $ml={495}><WindowsLogo /></Slot>
        <SearchBox>
          <Slot $w={18} $ml={14}>
            <svg width="18" height="18" viewBox="0 0 18 18" {...stroke} stroke="#ece8ec" strokeWidth="2.100"><circle cx="7.500" cy="7.500" r="6.400" /><path d="m12.200 12.200 4.600 4.600" /></svg>
          </Slot>
          <Text width={52} ml={12}>Search</Text>
          <Slot $w={50} $ml={114}><FruitBowl /></Slot>
        </SearchBox>
        <TaskApp $ml={15} $w={30}><TaskViewIcon /></TaskApp>
        <TaskApp $ml={25} $w={30}><CopilotIcon /></TaskApp>
        <TaskApp $ml={25} $w={30}><FolderIcon /></TaskApp>
        <TaskApp $ml={15} $w={50} $active><BraveIcon w={25} h={30} /><Indicator $w={20} $c="#d99fe3" /></TaskApp>
        <TaskApp $ml={15} $w={30}>
          <FaWhatsapp size={33} color="#25d366" />
          <Badge $l={13} $t={3} $w={26} $bg="#d99fe3">30</Badge>
        </TaskApp>
        <TaskApp $ml={25} $w={30}><CodeIcon /><Indicator $w={8} $c="#a89495" /></TaskApp>
        <Spacer />
        <Slot $w={14}>
          <svg width="14" height="8" viewBox="0 0 14 8" {...stroke} stroke="#fff" strokeWidth="1.800"><path d="m1 7 6-6 6 6" /></svg>
        </Slot>
        <Slot $w={18} $ml={24}><FaDropbox size={18} /></Slot>
        <Slot $w={20} $ml={21}>
          <svg width="20" height="13" viewBox="0 0 20 13"><path d="M4.500 13A4.500 4.500 0 0 1 4 4Q6 0 10.200 0q4 0 5.500 4A4.500 4.500 0 0 1 16 13z" fill="#bcaeab" /><path d="m1 11.500 9-5.200q1.500-.8 3 0L20 9q0 4-4 4H4q-2 0-3-1.500z" fill="#fff" /></svg>
        </Slot>
        <Stack $ml={23.5} $align="center" $lift={2}>
          <Text width={29}>ENG</Text>
          <Text width={15}>IN</Text>
        </Stack>
        <Slot $w={20} $ml={22.5}>
          <svg width="20" height="16" viewBox="0 0 20 16" {...stroke} stroke="#fff" strokeWidth="1.500"><path d="M1 6.200a12.800 12.800 0 0 1 18 0M3.900 9.200a8.700 8.700 0 0 1 12.200 0M6.700 12a4.800 4.800 0 0 1 6.600 0" /><circle cx="10" cy="14" r="1.300" fill="#fff" stroke="none" /></svg>
        </Slot>
        <Slot $w={20} $ml={10}>
          <svg width="20" height="18" viewBox="0 0 20 18" {...stroke} stroke="#fff" strokeWidth="1.300"><path d="M1 6.300h3L8.500 2.500v13L4 11.700H1zM11 6.500q1.600 2.500 0 5M13.500 4q3.500 5 0 10M16 1.500q5.800 7.500 0 15" /></svg>
        </Slot>
        <Slot $w={20} $ml={10}>
          <svg width="20" height="14" viewBox="0 0 20 14"><rect x=".7" y=".7" width="16" height="12.600" rx="3" fill="none" stroke="#fff" strokeWidth="1.400" /><rect x="3" y="3" width="5" height="8" rx="1" fill="#fff" /><path d="M18 4.500q2 .5 2 2.500t-2 2.500z" fill="#fff" /></svg>
        </Slot>
        <Stack $ml={20} $align="flex-end" $lift={3}>
          <Text width={36}>19:33</Text>
          <Text width={78}>01-02-2025</Text>
        </Stack>
        <Slot $w={24} />
      </Taskbar>
    </Screen>
  );
}
